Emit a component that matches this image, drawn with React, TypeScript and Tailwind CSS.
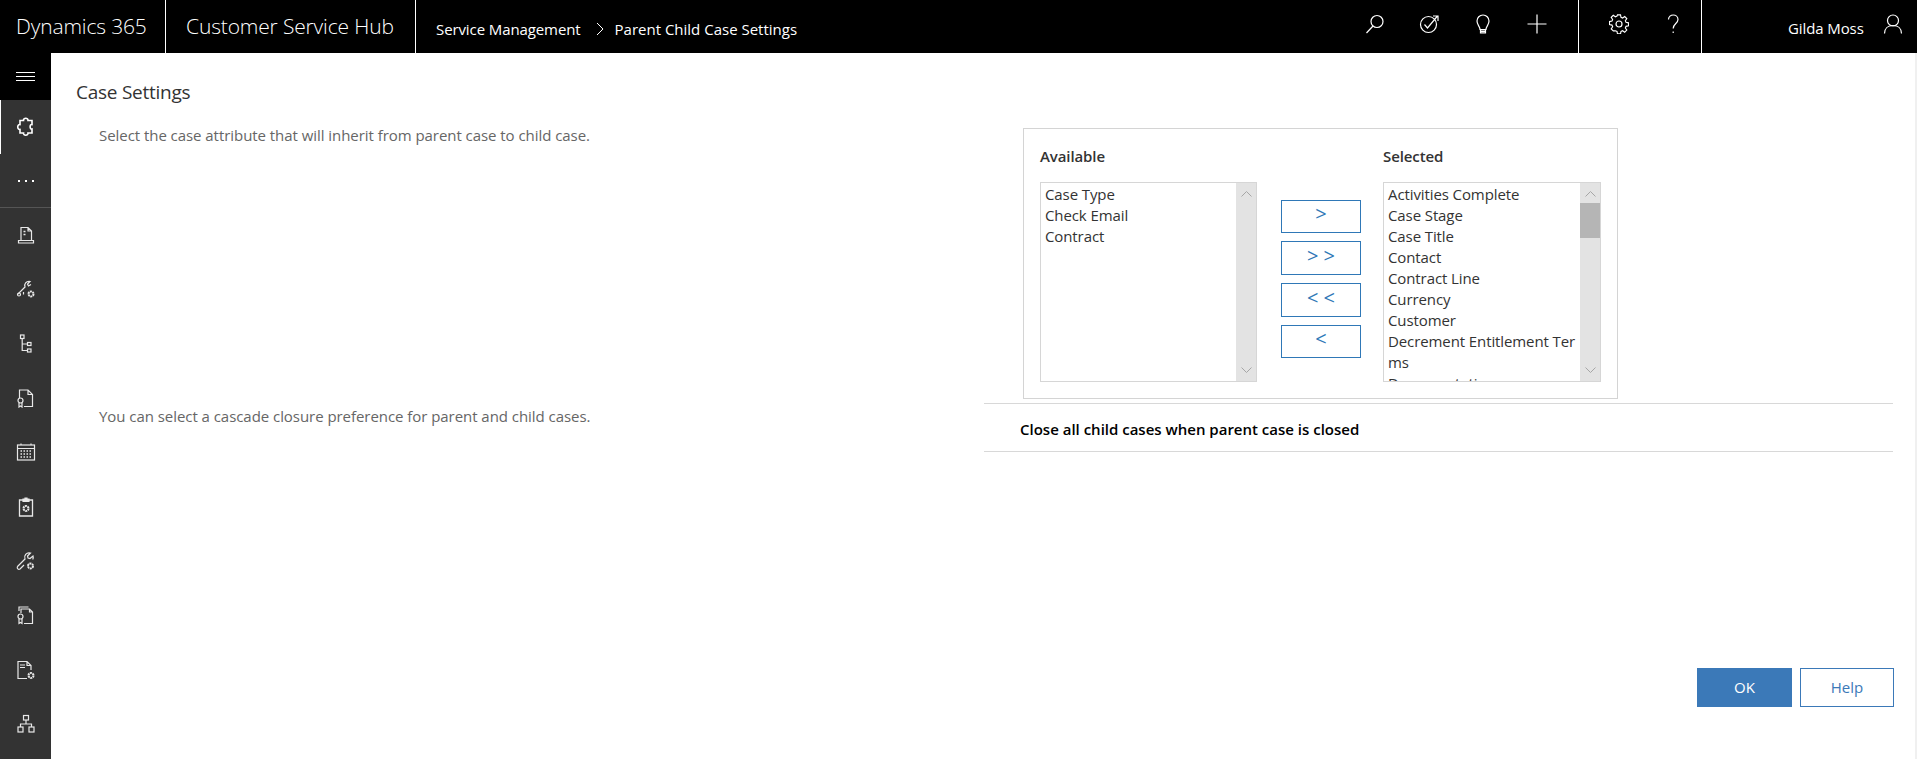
import type { ReactNode } from 'react';

const availableItems = ['Case Type', 'Check Email', 'Contract'];
const selectedItems = [
  'Activities Complete',
  'Case Stage',
  'Case Title',
  'Contact',
  'Contract Line',
  'Currency',
  'Customer',
  'Decrement Entitlement Ter',
  'ms',
  'Documentation',
];

function Svg({ size = 20, children }: { size?: number; children: ReactNode }) {
  return (
    <svg width={size} height={size} viewBox="0 0 20 20" fill="none" stroke="currentColor" strokeWidth="1.2">
      {children}
    </svg>
  );
}

// Top bar icons
const SearchIcon = () => (
  <Svg>
    <circle cx="12" cy="7.5" r="6" />
    <path d="M8 12 1.5 19" />
  </Svg>
);
const TargetIcon = () => (
  <Svg>
    <circle cx="9.5" cy="10.5" r="8" />
    <path d="M5.5 10.5 8.5 14 18.5 2M14 2h5v5" />
  </Svg>
);
const BulbIcon = () => (
  <Svg>
    <path d="M7 15.5c0-3-3-4.5-3-8.5a6 6 0 0 1 12 0c0 4-3 5.500-3 8.500zM7.500 15.500v3.500h5v-3.500" />
    <path d="M8 17.500h4" strokeWidth="2" />
  </Svg>
);
const PlusIcon = () => (
  <Svg>
    <path d="M10 .5v19M.5 10h19" />
  </Svg>
);
const GearIcon = () => (
  <Svg>
    <circle cx="10" cy="10" r="3" />
    <path d="M8.400 1h3.200l.5 2.600 1.700.7 2.200-1.500 2.200 2.200-1.500 2.200.7 1.700 2.600.5v3.200l-2.600.5-.7 1.700 1.500 2.200-2.200 2.200-2.200-1.500-1.700.7-.5 2.600H8.400l-.5-2.600-1.700-.7L4 17.900l-2.200-2.200L3.300 13.500l-.7-1.700L0 11.300V8.100l2.600-.5.7-1.700L1.800 3.700 4 1.500l2.200 1.500 1.700-.7z" transform="translate(.5 -.1) scale(.95)" />
  </Svg>
);
const HelpIcon = () => (
  <Svg>
    <path d="M5.500 5.500c0-6 9.500-6 9.500 0 0 4-4.800 4-4.800 9M10.200 17.500v1.500" />
  </Svg>
);
const PersonIcon = () => (
  <Svg>
    <circle cx="10" cy="6.500" r="5.500" />
    <path d="M1.500 19.500c0-5 3.500-8 8.500-8s8.500 3 8.500 8" />
  </Svg>
);

// Sidebar icons
const PuzzleIcon = () => (
  <Svg>
    <path d="M7.500 3.500C7 .5 12.500.5 12 3.500h4v4c-2.500-.5-2.500 5 0 4.500v4h-4c.5 3-5 3-4.500 0H4v-3.500c-3 .5-3-5.500 0-5v-4z" strokeWidth="1.600" />
  </Svg>
);
const CaseIcon = () => (
  <Svg>
    <path d="M5 15V2.500h7l3.500 3.500V15M12 2.500V6h3.500M2.500 15.500h15v2.500h-15z" />
    <path d="M7.500 6.500h2M7.500 9.500h2" strokeWidth="1.500" />
  </Svg>
);
const WrenchGearIcon = () => (
  <Svg>
    <path d="M2 15 9 8c-1-3 1-6 5-5.500L11.500 5l1 2 2.500-1.500" />
    <circle cx="3" cy="15.500" r="1.500" />
    <path d="M7.500 15.500V13" />
    <circle cx="15" cy="15" r="2.500" strokeWidth="2" strokeDasharray="2 .6" />
  </Svg>
);
const TreeIcon = () => (
  <Svg>
    <rect x="4.500" y="1" width="3.500" height="3.500" />
    <rect x="11.500" y="8.500" width="3.500" height="3" />
    <rect x="11.500" y="15" width="3.500" height="3" />
    <path d="M6.200 4.500v12h5.300M6.200 10h5.300" />
  </Svg>
);
const CertificateIcon = () => (
  <Svg>
    <path d="M3.500 10V2h8.500l4.500 4.500V18.500H8M12 2v4.500h4.500" />
    <circle cx="4.500" cy="12.500" r="2.500" />
    <path d="M3 15v4l1.500-1 1.500 1v-4" />
  </Svg>
);
const CalendarIcon = () => (
  <Svg>
    <rect x="1.500" y="3" width="17" height="15" />
    <path d="M1.500 6.500h17M5 1.500V3M15 1.500V3" />
    <path d="M4.500 9h11M4.500 12h11M4.500 15h11" strokeDasharray="1.500 1.500" strokeWidth="1.300" />
  </Svg>
);
const ClipboardGearIcon = () => (
  <Svg>
    <path d="M7 3H3.500v16h13V3H13" strokeWidth="1.300" />
    <path d="M7 4.500V2h2V1h2v1h2v2.500z" fill="currentColor" />
    <circle cx="10" cy="11.500" r="2.500" strokeWidth="2" strokeDasharray="2 .6" />
  </Svg>
);
const WrenchIcon = () => (
  <Svg>
    <path d="M1.500 15.500 9 8c-1.500-3.500 1.500-7 5.500-6L11.500 5l.5 2 2 .5 3-2.500c.5 1.500.3 2.500-.3 3.500M1.500 15.500c-1 2 1 3.500 2.500 2.500l4-4" />
    <circle cx="14.500" cy="15" r="2.500" strokeWidth="2" strokeDasharray="2 .6" />
  </Svg>
);
const CertificateStackIcon = () => (
  <Svg>
    <path d="M3 6V2h9.500" />
    <path d="M5 8V4h8.500l3 3v11.500H8M13.500 4v3h3" />
    <circle cx="4.500" cy="11.500" r="2.500" />
    <path d="M3 14v4.500l1.500-1 1.500 1V14" />
  </Svg>
);
const DocGearIcon = () => (
  <Svg>
    <path d="M11 18.500H2V1.500h9l4 4V10M11 1.500v4h4M4 5h5M4 7.500h5" />
    <circle cx="15" cy="15.500" r="2.500" strokeWidth="2" strokeDasharray="2 .6" />
  </Svg>
);
const OrgIcon = () => (
  <Svg>
    <rect x="7.500" y="1.500" width="5" height="4.500" />
    <rect x="2" y="13" width="5" height="5" />
    <rect x="13" y="13" width="5" height="5" />
    <path d="M10 6v4M4.500 13v-3h11v3" />
  </Svg>
);

const sidebarIcons = [
  CaseIcon,
  WrenchGearIcon,
  TreeIcon,
  CertificateIcon,
  CalendarIcon,
  ClipboardGearIcon,
  WrenchIcon,
  CertificateStackIcon,
  DocGearIcon,
  OrgIcon,
];

function Sidebar() {
  return (
    <aside className="w-[51px] shrink-0 bg-[#333333] text-white">
      <div className="flex h-[47px] items-center justify-center bg-black">
        <div className="flex w-[19px] flex-col gap-[3px]">
          <div className="h-px bg-white" />
          <div className="h-px bg-white" />
          <div className="h-px bg-white" />
        </div>
      </div>
      <div className="flex h-[54px] items-center justify-center border-l border-white">
        <PuzzleIcon />
      </div>
      <div className="flex h-[54px] items-center justify-center gap-[5px] border-b border-[#555555] pt-[1px]">
        <div className="h-[2px] w-[2px] bg-white" />
        <div className="h-[2px] w-[2px] bg-white" />
        <div className="h-[2px] w-[2px] bg-white" />
      </div>
      <div className="flex flex-col">
        {sidebarIcons.map((Icon, i) => (
          <div key={i} className="flex h-[54.300px] items-center justify-center text-[#e8e8e8]">
            <Icon />
          </div>
        ))}
      </div>
    </aside>
  );
}

function TopBar() {
  return (
    <header className="flex h-[53px] items-stretch bg-black text-white">
      <div className="flex w-[165px] items-center pl-[16px] text-[21px] font-light tracking-[-0.15px]">Dynamics 365</div>
      <div className="flex w-[250px] items-center border-l border-white pl-[20px] text-[21px] font-light tracking-[-0.15px]">
        Customer Service Hub
      </div>
      <div className="flex flex-1 items-center border-l border-white pl-[20px] pt-[5px] text-[15px] tracking-[-0.1px]">
        <span>Service Management</span>
        <svg width="8" height="14" viewBox="0 0 8 14" fill="none" stroke="currentColor" className="ml-[15px] mr-[11px]">
          <path d="m1 1 6 6-6 6" />
        </svg>
        <span className="tracking-normal">Parent Child Case Settings</span>
      </div>
      <div className="flex w-[230px] shrink-0 items-center justify-end pb-[5px] pr-[14px]">
        <div className="flex w-[54px] justify-center"><SearchIcon /></div>
        <div className="flex w-[54px] justify-center"><TargetIcon /></div>
        <div className="flex w-[54px] justify-center"><BulbIcon /></div>
        <div className="flex w-[54px] justify-center"><PlusIcon /></div>
      </div>
      <div className="flex w-[123px] shrink-0 items-center border-l border-white pb-[5px] pl-[13px]">
        <div className="flex w-[54px] justify-center"><GearIcon /></div>
        <div className="flex w-[54px] justify-center"><HelpIcon /></div>
      </div>
      <div className="flex w-[216px] shrink-0 items-center border-l border-white">
        <span className="ml-[86px] pt-[3px] text-[15px] tracking-[-0.1px]">Gilda Moss</span>
        <div className="ml-[19px] pb-[5px]"><PersonIcon /></div>
      </div>
    </header>
  );
}

function ListBox({ items, thumb }: { items: string[]; thumb?: boolean }) {
  return (
    <div className="flex h-[200px] w-full overflow-hidden border border-[#d6d6d6]">
      <div className="min-w-0 flex-1 overflow-hidden pl-[4px] pt-[1px] text-[15px] leading-[21px] tracking-[-0.1px] text-[#333333]">
        {items.map((item) => (
          <div key={item} className="whitespace-nowrap">{item}</div>
        ))}
      </div>
      <div className="relative flex w-[20px] shrink-0 flex-col items-center justify-between bg-[#e3e3e3] py-[8px]">
        {thumb && <div className="absolute left-0 right-0 top-[20px] h-[35px] bg-[#b5b5b5]" />}
        <svg width="11" height="6" viewBox="0 0 11 6" fill="none" stroke="#a6a6a6"><path d="m.5 5.500 5-5 5 5" /></svg>
        <svg width="11" height="6" viewBox="0 0 11 6" fill="none" stroke="#a6a6a6"><path d="m.5.5 5 5 5-5" /></svg>
      </div>
    </div>
  );
}

function MoveButton({ label, className }: { label: string; className: string }) {
  return (
    <button className={`flex w-[80px] items-center justify-center border border-[#2f78b7] pb-[5px] text-[20px] text-[#2f78b7] ${className}`}>
      {label}
    </button>
  );
}

function AttributePicker() {
  return (
    <div className="ml-[39px] flex h-[271px] w-[595px] border border-[#d4d4d4] pl-[16px]">
      <div className="w-[217px]">
        <div className="flex h-[53px] items-center pt-[2px] text-[15px] font-semibold tracking-[-0.1px] text-[#333333]">Available</div>
        <ListBox items={availableItems} />
      </div>
      <div className="ml-[24px] mt-[71px] flex w-[80px] flex-col gap-[8px]">
        <MoveButton label=">" className="h-[33px]" />
        <MoveButton label="> >" className="h-[34px]" />
        <MoveButton label="< <" className="h-[34px]" />
        <MoveButton label="<" className="h-[33px]" />
      </div>
      <div className="ml-[22px] w-[218px]">
        <div className="flex h-[53px] items-center pt-[2px] text-[15px] font-semibold tracking-[-0.1px] text-[#333333]">Selected</div>
        <ListBox items={selectedItems} thumb />
      </div>
    </div>
  );
}

export default function App() {
  return (
    <div className="flex h-[759px] w-[1917px] flex-col overflow-hidden bg-white font-['Open_Sans',sans-serif]">
      <TopBar />
      <div className="flex min-h-0 flex-1">
        <Sidebar />
        <main className="flex min-w-0 flex-1 flex-col border-r-2 border-[#f0f0f0] pl-[25px] pr-[22px]">
          <h1 className="mt-[26px] h-[26px] text-[19px] leading-[26px] tracking-[-0.25px] text-[#333333]">Case Settings</h1>
          <div className="mt-[23px] flex h-[275px]">
            <p className="-mt-[3px] w-[908px] pl-[23px] text-[15px] leading-[20px] tracking-[-0.05px] text-[#666666]">
              Select the case attribute that will inherit from parent case to child case.
            </p>
            <AttributePicker />
          </div>
          <div className="flex">
            <p className="w-[908px] pl-[23px] pt-[3px] text-[15px] leading-[20px] tracking-[-0.05px] text-[#666666]">
              You can select a cascade closure preference for parent and child cases.
            </p>
            <div className="flex h-[49px] flex-1 items-center border-y border-[#d8d8d8] pl-[36px] pt-[3px] text-[15px] font-semibold text-black">
              Close all child cases when parent case is closed
            </div>
          </div>
          <div className="-mr-[1px] mt-auto flex justify-end gap-[8px] pb-[52px]">
            <button className="h-[39px] w-[95px] bg-[#3b79b8] text-[15px] text-white">OK</button>
            <button className="h-[39px] w-[94px] border border-[#3b79b8] text-[15px] text-[#3b79b8]">Help</button>
          </div>
        </main>
      </div>
    </div>
  );
}
